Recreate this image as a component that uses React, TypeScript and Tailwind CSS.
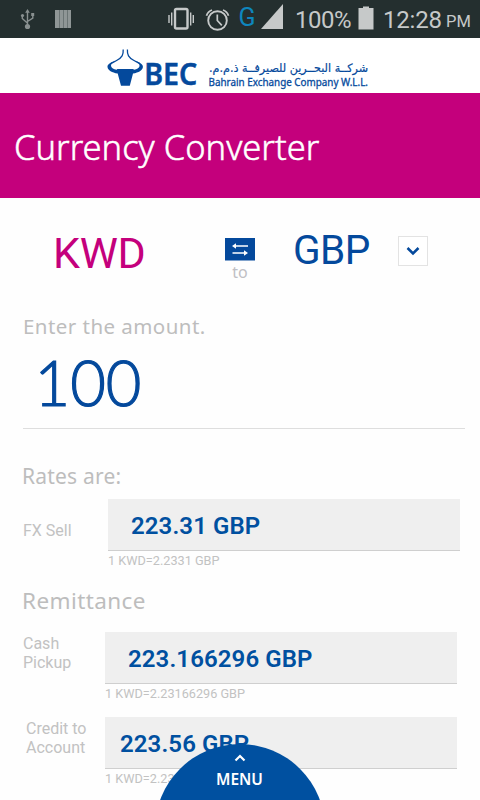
import type { ReactNode } from "react";

function StatusBar() {
  return (
    <header className="flex h-[38px] bg-[#242f2f] font-['Roboto',sans-serif] text-[#c6c9c9]">
      <svg width="295" height="38" viewBox="0 0 295 38" fill="none" className="shrink-0">
        <g stroke="#899090" strokeWidth="1.4" fill="none">
          <path d="M27.500 12V26M22.300 15v3.500l5 4.500M32.800 15v3l-5.300 3.500" />
        </g>
        <g fill="#899090">
          <path d="M27.500 9l2.300 3.800h-4.600z" />
          <circle cx="27.500" cy="26.500" r="2.600" />
          <circle cx="22.500" cy="15.500" r="1.600" />
          <path d="M31.200 13h3v3h-3z" />
        </g>
        <path d="M55 10h16v18H55z" fill="#8f9696" />
        <path d="M59.500 10v18M63.500 10v18M67.500 10v18" stroke="#6b7474" strokeWidth="1" />
        <rect x="175" y="9" width="12.500" height="19.500" rx="1.500" stroke="#c6c9c9" strokeWidth="2.400" />
        <path d="M169 15v8M171.700 12.500v13M190.700 12.500v13M193.300 15v8" stroke="#c6c9c9" strokeWidth="1.400" />
        <circle cx="217.500" cy="20.500" r="9.300" stroke="#c6c9c9" strokeWidth="1.900" />
        <path d="M217.300 14.500v6l4.500 4.800" stroke="#c6c9c9" strokeWidth="1.700" />
        <path d="M206.500 15.800q1.500-4.500 5.500-5.800M228.500 15.800q-1.500-4.500-5.500-5.800" stroke="#c6c9c9" strokeWidth="1.800" />
        <text x="238.600" y="25.500" fill="#0e86bd" fontSize="25" fontFamily="Roboto">G</text>
        <path d="M283 4v25h-22z" fill="#c6c9c9" />
      </svg>
      <span className="w-[63px] pt-[1px] text-[24px] leading-[38px] tracking-[-0.500px]">100%</span>
      <svg width="16" height="38" viewBox="0 0 16 38" className="shrink-0">
        <path d="M5 6.500h6V8h4.500v21.500H.5V8H5z" fill="#c6c9c9" />
      </svg>
      <span className="w-[72px] pl-[9px] pt-[1px] text-[24px] leading-[38px] tracking-[-0.200px]">12:28</span>
      <span className="pt-[3px] text-[16.500px] leading-[38px]">PM</span>
    </header>
  );
}

function Brand() {
  return (
    <div className="h-[55px] bg-white">
      <svg width="480" height="55" viewBox="0 38 480 55" fill="#04499c">
        <path
          d="M123.200 49.500c.3 5.500-1.200 8-6.200 10.800-2.500 1.400-4.500 2.200-6 3.200M127.400 49.500c-.3 5.500 1.200 8 6.200 10.800 2.500 1.400 4.500 2.200 6 3.200"
          fill="none"
          stroke="#04499c"
          strokeWidth="1.300"
        />
        <path d="M114.500 61c-4.500 1.800-7.200 3.500-7 6 .3 3.300 4.500 5.700 10.200 6.500l3.300 12.200h8.800l3.200-12.200c5.700-.8 9.600-3.200 9.900-6.500.2-2.500-2.500-4.200-7-6 2.800 2.200 4 3.800 3.600 5.200-.5 1.800-2.500 3-5.500 3.600l-.8-.8h-15.800l-.8.8c-3-.6-5-1.800-5.500-3.600-.4-1.400.6-3 3.400-5.200z" />
        <text x="144.300" y="85" fontFamily="Noto Sans" fontSize="30" fontWeight="600" stroke="#04499c" strokeWidth=".5" textLength="53" lengthAdjust="spacingAndGlyphs">BEC</text>
        <text x="209" y="72" fontFamily="DejaVu Sans" fontSize="11.500" stroke="#04499c" strokeWidth=".2" textLength="159" lengthAdjust="spacingAndGlyphs" direction="rtl" textAnchor="end">شركــة البحــرين للصيرفــة ذ.م.م.</text>
        <text x="208.500" y="86" fontFamily="Noto Sans" fontSize="11" stroke="#04499c" strokeWidth=".3" textLength="159.500" lengthAdjust="spacingAndGlyphs">Bahrain Exchange Company W.L.L.</text>
      </svg>
    </div>
  );
}

type RateProps = {
  label: ReactNode;
  value: string;
  note: string;
  labelClass: string;
  boxClass: string;
  valueClass: string;
};

function Rate({ label, value, note, labelClass, boxClass, valueClass }: RateProps) {
  return (
    <div className="flex">
      <div className={`shrink-0 font-['Roboto',sans-serif] text-[16px] leading-[19px] text-[#c2c2c2] ${labelClass}`}>{label}</div>
      <div className={`shrink-0 font-['Roboto',sans-serif] ${boxClass}`}>
        <div className={`h-[52px] border-b border-[#cfcfcf] bg-[#efefef] text-[24px] font-semibold leading-[54px] tracking-[0.100px] text-[#0050a0] ${valueClass}`}>{value}</div>
        <div className="text-[12.700px] leading-[20px] text-[#c2c2c2]">{note}</div>
      </div>
    </div>
  );
}

export default function App() {
  return (
    <div className="relative h-[800px] w-[480px] overflow-hidden bg-[#fefefe]">
      <StatusBar />
      <Brand />
      <h1 className="h-[105px] bg-[#c4007c] pl-[14px] font-['Noto_Sans',sans-serif] text-[34.500px] font-light leading-[107px] text-white [-webkit-text-stroke:0.500px_white]">
        Currency Converter
      </h1>

      <section className="flex h-[112px] font-['Roboto',sans-serif]">
        <div className="w-[225px] pl-[53px] pt-[30px] text-[43px] leading-[50px] tracking-[-0.300px] text-[#c4007c]">KWD</div>
        <div className="w-[68px] pt-[40px]">
          <svg width="30" height="23" viewBox="0 0 30 23" fill="none">
            <path d="M0 0h30v22.500H0z" fill="#04499c" />
            <path d="M9 8h14M7.500 15h13" stroke="#fff" strokeWidth="1.400" />
            <path d="M7 8l4-2.700v5.400zM23 15l-4-2.700v5.400z" fill="#fff" />
          </svg>
          <div className="w-[30px] text-center font-['Noto_Sans',sans-serif] text-[16px] leading-[23px] text-[#c0c0c4]">to</div>
        </div>
        <div className="w-[105px] pt-[27px] text-[40.500px] leading-[50px] tracking-[-0.500px] text-[#04499c]">GBP</div>
        <div className="mt-[38px] flex h-[30px] w-[30px] items-center justify-center border border-[#e3e3e3] bg-white">
          <svg width="14" height="10" viewBox="0 0 14 10" fill="none">
            <path d="M1.500 2l5.500 5.500L12.500 2" stroke="#04499c" strokeWidth="2.500" />
          </svg>
        </div>
      </section>

      <section className="ml-[23px] h-[119px] w-[442px] border-b border-[#dedede]">
        <div className="pt-[1px] font-['Noto_Sans',sans-serif] text-[20.500px] leading-[30px] tracking-[0.450px] text-[#bdbdbd]">Enter the amount.</div>
        <div className="origin-left pl-[12px] pt-[1px] font-['Lato',sans-serif] text-[64px] font-light leading-[80px] text-[#04499c] [transform:scaleX(0.960)] [-webkit-text-stroke:1.200px_#04499c]">100</div>
      </section>

      <h2 className="h-[70px] pl-[22px] pt-[32px] font-['Noto_Sans',sans-serif] text-[21px] leading-[30px] tracking-[0.200px] text-[#bdbdbd]">Rates are:</h2>
      <Rate label="FX Sell" value="223.31 GBP" note="1 KWD=2.2331 GBP" labelClass="w-[108px] pl-[23px] pt-[22px]" boxClass="w-[352px]" valueClass="pl-[23px]" />
      <h2 className="h-[61px] pl-[22px] pt-[15px] font-['Noto_Sans',sans-serif] text-[22.500px] leading-[30px] tracking-[0.400px] text-[#bdbdbd]">Remittance</h2>
      <Rate label={<>Cash<br />Pickup</>} value="223.166296 GBP" note="1 KWD=2.23166296 GBP" labelClass="w-[105px] pl-[23px] pt-[2px]" boxClass="w-[352px]" valueClass="pl-[23px]" />
      <div className="h-[13px]" />
      <Rate label={<>Credit to<br />Account</>} value="223.56 GBP" note="1 KWD=2.2356 GBP" labelClass="w-[105px] pl-[26px] pt-[2px]" boxClass="w-[352px]" valueClass="pl-[15px]" />

      <button className="absolute left-[154.500px] top-[744px] flex h-[170px] w-[170px] flex-col items-center rounded-full bg-[#0050a0] pt-[10px] text-white">
        <svg width="12" height="8" viewBox="0 0 12 8" fill="none">
          <path d="M1.500 6.500L6 2l4.500 4.500" stroke="#fff" strokeWidth="2.200" />
        </svg>
        <span className="pt-[6px] font-['Noto_Sans',sans-serif] text-[15.500px] font-semibold leading-[22px]">MENU</span>
      </button>
    </div>
  );
}
